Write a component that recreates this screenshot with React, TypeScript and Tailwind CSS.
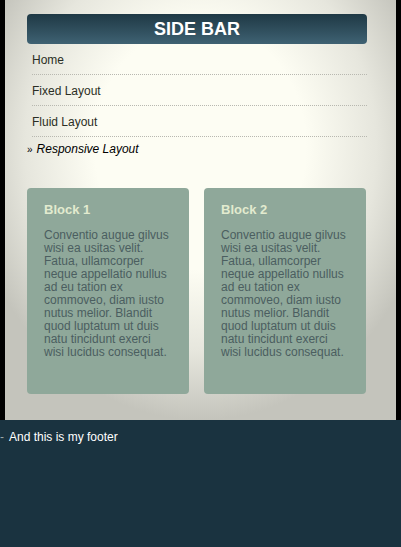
const menu = ["Home", "Fixed Layout", "Fluid Layout"];

const lorem =
  "Conventio augue gilvus wisi ea usitas velit. Fatua, ullamcorper neque appellatio nullus ad eu tation ex commoveo, diam iusto nutus melior. Blandit quod luptatum ut duis natu tincidunt exerci wisi lucidus consequat.";

function Block({ title }: { title: string }) {
  return (
    <div className="h-[206px] rounded-[4px] bg-[#8fa89a] px-[17px] pt-[14px]">
      <h3 className="text-[13px] font-bold leading-[16px] text-[#e2ebcf]">{title}</h3>
      <p className="mt-[11px] text-[12px] leading-[13px] text-[#4b5e60]">{lorem}</p>
    </div>
  );
}

export default function App() {
  return (
    <div className="min-h-[547px] bg-[#1a3340] font-['Liberation_Sans',Arial,sans-serif]">
      <div className="bg-black px-[5px]">
        <div className="h-[420px] bg-[radial-gradient(ellipse_60%_65%_at_50%_35%,#fdfdf3_45%,#e6e6dd_75%,#c4c4bc_100%)] px-[22px] pt-[14px]">
          <div className="mr-[7px]">
            <div className="flex h-[30px] items-center justify-center rounded-[4px] bg-gradient-to-b from-[#1f3945] to-[#3f6273]">
              <span className="text-[18px] font-bold text-white">SIDE BAR</span>
            </div>
            <ul className="text-[12px] text-[#2a2e24]">
              {menu.map((item) => (
                <li
                  key={item}
                  className="ml-[5px] flex h-[31px] items-center border-b border-dotted border-[#b8b8b0] pt-[2px]"
                >
                  {item}
                </li>
              ))}
              <li className="flex h-[24px] items-center italic text-black">
                <span className="mr-[4px] text-[10px] not-italic">»</span>
                Responsive Layout
              </li>
            </ul>
          </div>
          <div className="mt-[27px] grid grid-cols-[162px_162px] gap-[15px]">
            <Block title="Block 1" />
            <Block title="Block 2" />
          </div>
        </div>
      </div>
      <footer className="flex items-center pt-[8px] text-[12px] text-white">
        <span className="mr-[5px] text-[#9aa]">-</span>
        And this is my footer
      </footer>
    </div>
  );
}
